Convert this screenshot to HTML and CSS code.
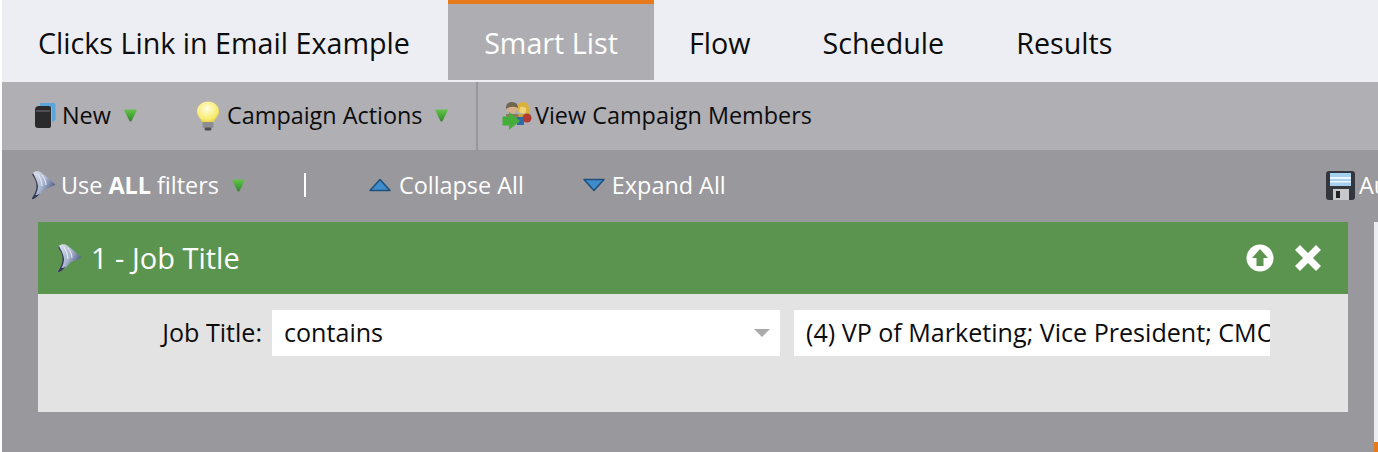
FILE: index.html
```html
<!DOCTYPE html>
<html lang="en">
<head>
<meta charset="utf-8">
<title>Smart List</title>
<link rel="stylesheet" href="styles.css">
</head>
<body>
<svg class="defs" width="0" height="0" aria-hidden="true">
  <defs>
    <linearGradient id="funnelGrad" x1="0" y1="0" x2="1" y2="0.6">
      <stop offset="0" stop-color="#e4e8f0"/>
      <stop offset="0.55" stop-color="#a9b4cf"/>
      <stop offset="1" stop-color="#46557e"/>
    </linearGradient>
    <linearGradient id="caretGrad" x1="0" y1="0" x2="0" y2="1">
      <stop offset="0" stop-color="#68c24e"/>
      <stop offset="0.5" stop-color="#46a835"/>
      <stop offset="1" stop-color="#3f7f3a"/>
    </linearGradient>
    <symbol id="funnel" viewBox="0 0 26 30">
      <path d="M3 3 C5 1 9 0.500 12 3 C16 6 21 10.500 25.500 14.500 C22 16.500 18 18 15 19 C12 22 8 27 3.500 29 C2 29.500 1 28.500 2 27 C5 23.500 7 20 7 16 C6.500 11 4.500 8 2.500 5 C2 4 2.500 3.500 3 3 Z" fill="url(#funnelGrad)"/>
      <path d="M2.500 27 C1 28.500 2 29.500 3.500 29 C6 28 8 26 10 23.500 C8 24.500 7 25 5.500 25 C7 22 8 19 8 16 C7.500 11 5 7 3 3 C2 4 2 5 3 6 C5 9 6.500 12 6.500 16 C6.500 20 5 23.500 2.500 27 Z" fill="#343c50"/>
      <path d="M8 4 C10 8 12 11 12 16 M12 5 C14 8 16 11 16 15" stroke="#f1f4fa" stroke-width="1" fill="none"/>
    </symbol>
    <symbol id="caret" viewBox="0 0 12 12">
      <path d="M1 0.500 H11 Q12 0.500 11.500 1.800 L7 11 Q6 12.200 5 11 L0.500 1.800 Q0 0.500 1 0.500 Z" fill="url(#caretGrad)"/>
    </symbol>
  </defs>
</svg>
<div class="page">
  <nav class="tabs">
    <span class="tab-title">Clicks Link in Email Example</span>
    <span class="tab tab-active">Smart List</span>
    <span class="tab tab-flow">Flow</span>
    <span class="tab tab-schedule">Schedule</span>
    <span class="tab tab-results">Results</span>
  </nav>
  <div class="toolbar">
    <div class="tool tool-new">
      <svg class="icon-book" viewBox="0 0 22 26" aria-hidden="true">
        <path d="M6 1 H20 Q21.500 1 21.500 3 V18 L18 20 V5 H6 Z" fill="#5aa6dc"/>
        <path d="M1 8 Q1 4 5 4 H15 Q17 4 17 6 V24 Q17 26 15 26 H4 Q1 26 1 23 Z" fill="#2a2a2c"/>
        <path d="M2 9 H16" stroke="#77777a" stroke-width="1"/>
      </svg>
      <span>New</span>
      <svg class="caret caret-new"><use href="#caret"/></svg>
    </div>
    <div class="tool tool-actions">
      <svg class="icon-bulb" viewBox="0 0 24 30" aria-hidden="true">
        <defs>
          <radialGradient id="bulbGrad" cx="0.45" cy="0.35" r="0.7">
            <stop offset="0" stop-color="#fffde0"/>
            <stop offset="0.7" stop-color="#f8ec6e"/>
            <stop offset="1" stop-color="#e2c93a"/>
          </radialGradient>
        </defs>
        <path d="M12 0.500 C18.500 0.500 23 5 23 10.500 C23 15 19.500 17 17.500 21.500 H6.500 C4.500 17 1 15 1 10.500 C1 5 5.500 0.500 12 0.500 Z" fill="url(#bulbGrad)"/>
        <rect x="6.500" y="21" width="11" height="6" rx="1" fill="#8e8e92"/>
        <rect x="8.500" y="26.500" width="7" height="3" rx="1.500" fill="#4e4e52"/>
      </svg>
      <span>Campaign Actions</span>
      <svg class="caret caret-actions"><use href="#caret"/></svg>
    </div>
    <div class="tool tool-members">
      <svg class="icon-members" viewBox="0 0 30 30" aria-hidden="true">
        <circle cx="21" cy="8" r="5.500" fill="#efd27a"/>
        <path d="M15.500 8 Q16 1.500 21.500 2 Q27 2 27 9 L27.500 15 H24 V8 Q21 6 18 7 L17 13 Z" fill="#d9b23c"/>
        <path d="M15 14 H27 V20 H15 Z" fill="#c9a63a"/>
        <circle cx="10" cy="8" r="5.500" fill="#d6b08a"/>
        <path d="M4 9 Q3.500 2 10 2 Q16 2 16 8 Q10 5 4 9 Z" fill="#6f6650"/>
        <path d="M4 14 H16 L18 22 H5 Z" fill="#8a7a5c"/>
        <circle cx="25" cy="18" r="4.500" fill="#b23a32"/>
        <path d="M15 17 H22 V25 H15 Z" fill="#2f6aa5"/>
        <path d="M0.500 16.500 H7 V12 L18 21 L7 30 V25.500 H0.500 Z" fill="#45ae3a"/>
      </svg>
      <span>View Campaign Members</span>
    </div>
  </div>
  <div class="content">
    <main class="main">
      <div class="filterbar">
        <div class="filterbar-left">
          <svg class="icon-funnel"><use href="#funnel"/></svg>
          <span class="use-all">Use <b>ALL</b> filters</span>
          <svg class="caret caret-use"><use href="#caret"/></svg>
          <i class="pipe"></i>
          <span class="fold fold-collapse">
            <svg class="arrow" viewBox="0 0 22 14" aria-hidden="true"><path d="M11 1.500 L21 12.500 H1 Z" fill="#3f8ccb" stroke="#1f4f7c" stroke-width="1.500" stroke-linejoin="round"/></svg>
            Collapse All
          </span>
          <span class="fold fold-expand">
            <svg class="arrow arrow-down" viewBox="0 0 22 14" aria-hidden="true"><path d="M11 12.500 L21 1.500 H1 Z" fill="#3f8ccb" stroke="#1f4f7c" stroke-width="1.500" stroke-linejoin="round"/></svg>
            Expand All
          </span>
        </div>
        <div class="autosave">
          <svg class="icon-disk" viewBox="0 0 29 29" aria-hidden="true">
            <rect width="29" height="29" rx="3" fill="#33363d"/>
            <rect x="4" y="2" width="21" height="13" fill="#a6d0f0"/>
            <rect x="4" y="6" width="21" height="2" fill="#eef6fc"/>
            <rect x="4" y="10" width="21" height="1.500" fill="#eef6fc"/>
            <rect x="7" y="18" width="16" height="11" fill="#c6c8cc"/>
            <rect x="10" y="20" width="4" height="7" fill="#222"/>
          </svg>
          <span class="autosave-text">Au</span>
        </div>
      </div>
      <section class="card">
        <header class="card-head">
          <svg class="icon-funnel icon-funnel-card"><use href="#funnel"/></svg>
          <h2 class="card-title">1 - Job Title</h2>
          <svg class="icon-up" viewBox="0 0 28 28" aria-hidden="true">
            <circle cx="14" cy="14" r="13.500" fill="#fff"/>
            <path d="M14 5 L22 14 H17.500 V22 H10.500 V14 H6 Z" fill="#5b944e"/>
          </svg>
          <svg class="icon-x" viewBox="0 0 28 28" aria-hidden="true">
            <path d="M3.500 3.500 L24.500 24.500 M24.500 3.500 L3.500 24.500" stroke="#fff" stroke-width="7"/>
          </svg>
        </header>
        <div class="card-body">
          <label class="field-label">Job Title:</label>
          <div class="select">
            <span>contains</span>
            <i class="select-arrow"></i>
          </div>
          <div class="value"><span>(4) VP of Marketing; Vice President; CMO; Chief Marketing Officer</span></div>
        </div>
      </section>
    </main>
    <aside class="side">
      <div class="side-accent"></div>
    </aside>
  </div>
</div>
</body>
</html>
```

FILE: styles.css
```css
* { box-sizing: border-box; }
html, body { margin: 0; height: 100%; background: #fff; }
body { overflow: hidden; font-family: "Open Sans", "Noto Sans", sans-serif; }
.defs { display: block; height: 0; }
.page { width: 1378px; height: 452px; padding-left: 2px; display: flex; flex-direction: column; overflow: hidden; }

.tabs { flex: none; height: 82px; background: #eceef3; display: flex; align-items: stretch; font-size: 28.7px; color: #0c0c0c; }
.tab-title { margin-left: 36px; width: 410px; line-height: 86px; }
.tab { line-height: 86px; }
.tab-active { width: 206px; height: 80px; background: #aeadb2; border-top: 4px solid #e97a1c; color: #fff; text-align: center; line-height: 78px; }
.tab-flow { margin-left: 35px; }
.tab-schedule { margin-left: 72px; }
.tab-results { margin-left: 72px; }

.toolbar { flex: none; height: 68px; background: #b0afb4; display: flex; align-items: center; font-size: 23.4px; color: #0c0c0c; }
.tool { display: flex; align-items: center; height: 100%; padding-bottom: 2px; }
.tool-new { width: 160px; padding-left: 32px; }
.tool-actions { width: 316px; padding-left: 34px; border-right: 2px solid #98979c; }
.tool-members { padding-left: 24px; }
.icon-book { width: 22px; height: 26px; margin-right: 6px; }
.icon-bulb { width: 24px; height: 30px; margin-right: 7px; margin-top: 2px; }
.icon-members { width: 30px; height: 30px; margin-right: 3px; }
.caret { width: 13px; height: 13px; flex: none; }
.caret-new { margin-left: 13px; }
.caret-actions { margin-left: 12px; }

.content { flex: 1; min-height: 0; background: #99989d; display: flex; }
.main { flex: 1; min-width: 0; padding: 0 26px 0 36px; }
.side { flex: none; width: 4px; margin-top: 72px; background: #eceef3; display: flex; flex-direction: column; justify-content: flex-end; }
.side-accent { height: 10px; background: #e97a1c; }

.filterbar { height: 72px; margin-left: -8px; margin-right: -30px; padding-bottom: 2px; display: flex; justify-content: space-between; align-items: center; font-size: 23.4px; color: #fff; overflow: hidden; }
.filterbar-left { display: flex; align-items: center; }
.icon-funnel { width: 26px; height: 30px; margin-right: 5px; flex: none; }
.caret-use { margin-left: 13px; }
.pipe { width: 2px; height: 24px; background: #fff; margin-left: 59px; }
.fold { display: flex; align-items: center; }
.fold-collapse { margin-left: 63px; }
.fold-expand { margin-left: 59px; }
.arrow { width: 22px; height: 14px; margin-right: 8px; }
.arrow-down { margin-right: 7px; }
.autosave { display: flex; align-items: center; width: 52px; flex: none; }
.icon-disk { width: 29px; height: 29px; flex: none; margin-right: 4px; }

.card { width: 1310px; }
.card-head { height: 72px; background: #5b944e; display: flex; align-items: center; padding-left: 18px; color: #fff; }
.icon-funnel-card { margin-right: 9px; }
.card-title { flex: 1; margin: 0 0 2px; font-size: 29px; font-weight: 400; }
.icon-up { width: 28px; height: 28px; margin-right: 20px; }
.icon-x { width: 28px; height: 28px; margin-right: 26px; }
.card-body { height: 118px; background: #e3e3e3; display: flex; align-items: flex-start; padding-top: 16px; font-size: 25.1px; color: #0c0c0c; }
.field-label { width: 224px; height: 46px; line-height: 44px; text-align: right; }
.select { width: 508px; height: 46px; margin-left: 10px; padding: 0 10px 2px 12px; background: #fff; display: flex; align-items: center; justify-content: space-between; }
.select-arrow { width: 0; height: 0; border-left: 8px solid transparent; border-right: 8px solid transparent; border-top: 8px solid #aaa; margin-top: 2px; }
.value { width: 476px; height: 46px; margin-left: 14px; padding-left: 12px; background: #fff; line-height: 44px; white-space: nowrap; overflow: hidden; }
```
